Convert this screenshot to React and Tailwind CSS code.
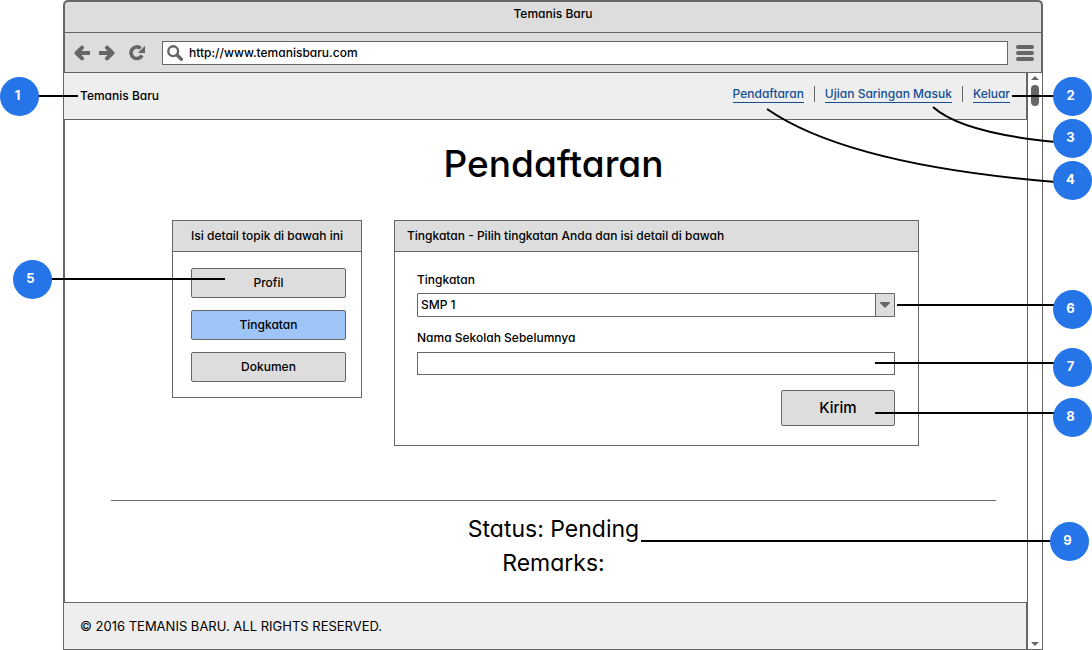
import React from 'react';

const topics = [
  { label: 'Profil', active: false },
  { label: 'Tingkatan', active: true },
  { label: 'Dokumen', active: false },
];

function BackIcon() {
  return (
    <svg width="16" height="16" viewBox="0 0 16 16" fill="none" stroke="#666" strokeWidth="4" aria-hidden="true">
      <path d="M8 2.6 L2.6 8 L8 13.4" strokeLinecap="round" strokeLinejoin="round" />
      <path d="M3 8 H16" strokeLinecap="butt" />
    </svg>
  );
}

function ForwardIcon() {
  return (
    <svg width="16" height="16" viewBox="0 0 16 16" fill="none" stroke="#666" strokeWidth="4" aria-hidden="true">
      <path d="M8 2.6 L13.4 8 L8 13.4" strokeLinecap="round" strokeLinejoin="round" />
      <path d="M0 8 H13" strokeLinecap="butt" />
    </svg>
  );
}

function ReloadIcon() {
  return (
    <svg width="16" height="16" viewBox="0 0 16 16" aria-hidden="true">
      <path d="M11.6 3.3 A5.8 5.8 0 1 0 13 10.4" fill="none" stroke="#666" strokeWidth="3.6" />
      <path d="M16 0.8 V8 H8.8 Z" fill="#666" />
    </svg>
  );
}

function SearchIcon() {
  return (
    <svg width="16" height="16" viewBox="0 0 16 16" fill="none" stroke="#666" aria-hidden="true">
      <circle cx="6.2" cy="6.2" r="4.9" strokeWidth="2.4" />
      <path d="M10 10 L14.4 14.2" strokeWidth="3.4" strokeLinecap="round" />
    </svg>
  );
}

function Badge({ className, children }) {
  return (
    <span
      className={
        'absolute flex h-[39px] w-[39px] items-center justify-center rounded-full bg-[#2574e8] pr-[4px] pb-[2px] text-[13px] leading-none font-bold text-white ' +
        className
      }
    >
      {children}
    </span>
  );
}

function Callouts() {
  return (
    <>
      <div className="pointer-events-none absolute top-0 left-0 h-[650px] w-[240px]">
        <svg width="240" height="650" stroke="#000" strokeWidth="2" aria-hidden="true">
          <path d="M38 96 H78 M50 279 H225" />
        </svg>
        <Badge className="top-[77px] left-0">1</Badge>
        <Badge className="top-[260px] left-[13px]">5</Badge>
      </div>
      <div className="pointer-events-none absolute top-0 right-0 h-[650px] w-[492px]">
        <svg width="492" height="650" viewBox="600 0 492 650" fill="none" stroke="#000" strokeWidth="2" aria-hidden="true">
          <path d="M1012 96 H1056 M897 305 H1056 M875 363 H1056 M875 413 H1056 M641 541 H1054" />
          <path d="M933 107 Q962 133 1056 142" />
          <path d="M767 109 Q848 165 1056 182" />
        </svg>
        <Badge className="top-[77px] right-0">2</Badge>
        <Badge className="top-[119px] right-0">3</Badge>
        <Badge className="top-[161px] right-0">4</Badge>
        <Badge className="top-[290px] right-0">6</Badge>
        <Badge className="top-[348px] right-0">7</Badge>
        <Badge className="top-[398px] right-0">8</Badge>
        <Badge className="top-[522px] right-[3px]">9</Badge>
      </div>
    </>
  );
}

function BrowserBar() {
  return (
    <header className="rounded-t-[5px] border-2 border-b-0 border-[#666] bg-[#ddd]">
      <div className="flex h-[31px] items-start justify-center border-b border-[#666] pt-[2px]">
        Temanis Baru
      </div>
      <div className="flex h-[40px] items-center border-b border-[#666] pr-[7px] pl-[9px]">
        <div className="flex items-center">
          <button type="button" aria-label="Kembali"><BackIcon /></button>
          <button type="button" aria-label="Maju" className="ml-[9px]"><ForwardIcon /></button>
          <button type="button" aria-label="Muat ulang" className="ml-[14px]"><ReloadIcon /></button>
        </div>
        <label className="ml-[17px] flex h-[24px] flex-1 items-center border border-[#666] bg-white pl-[4px]">
          <SearchIcon />
          <input
            type="text"
            aria-label="Alamat"
            defaultValue="http://www.temanisbaru.com"
            className="ml-[6px] min-w-0 flex-1 bg-transparent outline-none"
          />
        </label>
        <button type="button" aria-label="Menu" className="ml-[8px] flex w-[18px] flex-col gap-[2px]">
          <span className="h-[4px] rounded-[2px] bg-[#666]" />
          <span className="h-[4px] rounded-[2px] bg-[#666]" />
          <span className="h-[4px] rounded-[2px] bg-[#666]" />
        </button>
      </div>
    </header>
  );
}

function Scrollbar() {
  return (
    <div className="flex w-[15px] flex-col items-center justify-between border-l border-[#666] pt-[3px] pb-[3px]">
      <div className="flex flex-col items-center gap-[5px]">
        <svg width="8" height="4" viewBox="0 0 8 4" fill="#666" aria-hidden="true"><path d="M4 0 L8 4 H0 Z" /></svg>
        <div className="h-[21px] w-[8px] rounded-[4px] bg-[#666]" />
      </div>
      <svg width="8" height="4" viewBox="0 0 8 4" fill="#666" aria-hidden="true"><path d="M0 0 H8 L4 4 Z" /></svg>
    </div>
  );
}

function SiteNav() {
  return (
    <div className="flex h-[47px] items-center justify-between border-r border-b border-[#666] bg-[#eee] px-[16px]">
      <span>Temanis Baru</span>
      <nav className="flex items-center gap-[10px] pb-[4px] text-[#144e92]">
        <a href="#pendaftaran" className="border-b border-[#144e92] leading-[16px]">Pendaftaran</a>
        <span className="h-[16px] w-px bg-[#666]" />
        <a href="#ujian" className="border-b border-[#144e92] leading-[16px]">Ujian Saringan Masuk</a>
        <span className="h-[16px] w-px bg-[#666]" />
        <a href="#keluar" className="border-b border-[#144e92] leading-[16px]">Keluar</a>
      </nav>
    </div>
  );
}

function TopicPanel() {
  return (
    <section className="w-[190px] shrink-0 border border-[#666] bg-white">
      <h2 className="flex h-[31px] items-center justify-center border-b border-[#666] bg-[#ddd] whitespace-nowrap">
        Isi detail topik di bawah ini
      </h2>
      <div className="flex flex-col gap-[12px] pt-[16px] pr-[15px] pb-[15px] pl-[18px]">
        {topics.map((t) => (
          <button
            key={t.label}
            type="button"
            className={
              'flex h-[30px] items-center justify-center rounded-[2px] border border-[#666] ' +
              (t.active ? 'bg-[#9fc4f8]' : 'bg-[#ddd]')
            }
          >
            {t.label}
          </button>
        ))}
      </div>
    </section>
  );
}

function LevelPanel() {
  return (
    <section className="flex-1 border border-[#666] bg-white">
      <h2 className="flex h-[31px] items-center border-b border-[#666] bg-[#ddd] pl-[12px]">
        Tingkatan - Pilih tingkatan Anda dan isi detail di bawah
      </h2>
      <form className="flex flex-col pt-[18px] pr-[23px] pb-[19px] pl-[22px]">
        <label htmlFor="tingkatan">Tingkatan</label>
        <div className="mt-[3px] grid h-[24px]">
          <select
            id="tingkatan"
            defaultValue="SMP 1"
            className="col-start-1 row-start-1 appearance-none rounded-[1px] border border-[#666] bg-white pr-[20px] pl-[3px] outline-none"
          >
            <option>SMP 1</option>
          </select>
          <span className="pointer-events-none col-start-1 row-start-1 flex w-[20px] items-center justify-center justify-self-end rounded-r-[1px] border border-[#666] bg-[#ddd]">
            <svg width="10" height="6" viewBox="0 0 10 6" fill="#666" aria-hidden="true"><path d="M0 0 H10 V1 L5 6 L0 1 Z" /></svg>
          </span>
        </div>
        <label htmlFor="sekolah" className="mt-[11px]">Nama Sekolah Sebelumnya</label>
        <input id="sekolah" type="text" className="mt-[4px] h-[23px] border border-[#666] bg-white px-[3px] outline-none" />
        <button
          type="button"
          className="mt-[15px] flex h-[36px] w-[114px] items-center justify-center self-end rounded-[2px] border border-[#666] bg-[#ddd] text-[15px]"
        >
          Kirim
        </button>
      </form>
    </section>
  );
}

export default function App() {
  return (
    <div className="relative min-h-screen bg-white pr-[49px] pl-[63px] font-['Inter','Liberation_Sans',sans-serif] text-[12px] leading-[20px] font-medium text-black [font-feature-settings:'cv11']">
      <div className="flex min-h-screen flex-col">
        <BrowserBar />
        <div className="flex flex-1 border-r border-b border-l border-[#666]">
          <div className="flex flex-1 flex-col">
            <SiteNav />
            <main className="flex flex-1 flex-col border-l border-[#666] pr-[31px] pl-[46px]">
              <h1 className="pt-[20px] text-center text-[37px] leading-[48px]">Pendaftaran</h1>
              <div className="mt-[32px] flex items-start gap-[32px] pr-[77px] pl-[61px]">
                <TopicPanel />
                <LevelPanel />
              </div>
              <hr className="mt-[54px] border-[#666]" />
              <div className="mt-[11px] text-center text-[23px] leading-[34px] font-normal">
                <p>Status: Pending</p>
                <p>Remarks:</p>
              </div>
            </main>
            <footer className="flex h-[47px] items-center border-t border-r border-[#666] bg-[#eee] pl-[16px] text-[13px] font-normal">
              © 2016 TEMANIS BARU. ALL RIGHTS RESERVED.
            </footer>
          </div>
          <Scrollbar />
        </div>
      </div>
      <Callouts />
    </div>
  );
}
